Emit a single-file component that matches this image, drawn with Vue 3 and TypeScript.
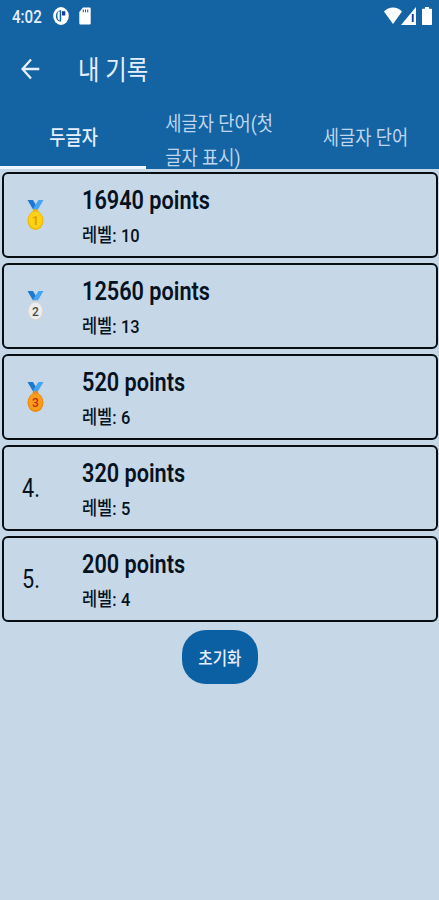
<script setup lang="ts">
import { ref } from 'vue'

interface Score { points: number; level: number }
interface Medal { disc: string; rim: string; ink: string }

const tabs: string[][] = [['두글자'], ['세글자 단어(첫', '글자 표시)'], ['세글자 단어']]
const active = ref(0)
const scores = ref<Score[]>([
  { points: 16940, level: 10 },
  { points: 12560, level: 13 },
  { points: 520, level: 6 },
  { points: 320, level: 5 },
  { points: 200, level: 4 },
])
const medals: Medal[] = [
  { disc: '#fcd116', rim: '#efb70c', ink: '#e09a00' },
  { disc: '#ececec', rim: '#d2d3d5', ink: '#4a4a4a' },
  { disc: '#fb9d1c', rim: '#ee8a12', ink: '#c62b0b' },
]
</script>

<template>
  <div class="screen">
    <header class="top">
      <div class="status">
        <span class="clock"><span class="text">4:02</span></span>
        <svg class="app-dot" width="16" height="18" viewBox="0 0 16 18">
          <ellipse cx="8" cy="9" rx="7.8" ry="9" fill="#fff" />
          <path d="M8.200 3.200V14.600C4.800 14.600 2.900 12.100 2.900 9S4.800 3.200 8.200 3.200z" fill="#1464a4" />
          <path d="M5 4.500h1.700v9H6.200Q4.300 12 4.300 9z" fill="#fff" />
          <path d="M9 4.200h3.300v4.300H9z" fill="#173f9a" />
        </svg>
        <svg class="sd" width="12" height="18" viewBox="0 0 12 18">
          <path d="M4 .5h6.500a1.200 1.200 0 0 1 1.200 1.200v14.600a1.200 1.200 0 0 1-1.200 1.200h-9A1.200 1.200 0 0 1 .3 16.300V5z" fill="#fff" />
          <path d="M4.300 2.500v2.700M6.500 2.500v2.700M8.700 2.500v2.700" stroke="#1464a4" stroke-width="1.100" />
        </svg>
        <span class="grow"></span>
        <svg width="18" height="17" viewBox="0 0 18 17"><path d="M9 17 0 4.500C4.800-1 13.200-1 18 4.500z" fill="#fff" /></svg>
        <svg class="signal" width="15" height="18" viewBox="0 0 15 18">
          <path d="M15 0v18H0z" fill="#fff" /><path d="M10.800 7h1.900V15H10.800z" fill="#173f9a" />
        </svg>
        <svg class="battery" width="10" height="18" viewBox="0 0 10 18"><path d="M3 0h4v1.800h2.300q.7 0 .7.800v14.600q0 .8-.7.800H.7Q0 18 0 17.200V2.600q0-.8.7-.8H3z" fill="#fff" /></svg>
      </div>
      <div class="bar">
        <svg width="19" height="22" viewBox="0 0 19 22"><path d="M10 1.500 1.500 11 10 20.500M1.500 11H18.300" fill="none" stroke="#e6efff" stroke-width="2.300" /></svg>
        <h1 class="title"><span class="text">내 기록</span></h1>
      </div>
      <nav class="tabs">
        <button v-for="(tab, i) in tabs" :key="i" class="tab" :class="{ active: active === i, double: tab.length > 1 }" @click="active = i">
          <span class="label"><span v-for="line in tab" :key="line" class="line">{{ line }}</span></span>
        </button>
      </nav>
    </header>

    <main class="list">
      <article v-for="(s, i) in scores" :key="i" class="card">
        <div class="rank">
          <svg v-if="i < 3" class="medal" width="17" height="31" viewBox="0 0 17 31">
            <path d="M.5 0H6l3.800 6.500-2.600 5z" fill="#1c78d0" />
            <path d="M16.500 0h-5L6 8.500l3.500 3.200z" fill="#44a5f3" />
            <rect x="5.800" y="9.300" width="5.400" height="3.800" rx="1" :fill="medals[i].rim" />
            <ellipse cx="8.500" cy="20.500" rx="8" ry="9.700" :fill="medals[i].rim" />
            <ellipse cx="8.500" cy="20" rx="6.900" ry="8.500" :fill="medals[i].disc" />
            <text x="8.500" y="24.800" class="numeral" text-anchor="middle" :fill="medals[i].ink">{{ i + 1 }}</text>
          </svg>
          <span v-else class="text place">{{ i + 1 }}.</span>
        </div>
        <div class="info">
          <span class="text points">{{ s.points }} points</span>
          <span class="level"><span class="text ko">레벨:</span><span class="text num">{{ s.level }}</span></span>
        </div>
      </article>
    </main>
    <button class="reset"><span class="text">초기화</span></button>
  </div>
</template>

<style>
body { margin: 0; background: #c6d8e7; }
</style>

<style scoped>
.screen {
  box-sizing: border-box;
  height: 900px;
  overflow: hidden;
  background: #c6d8e7;
  color: #06121f;
  font-family: Roboto, "Noto Sans CJK KR", sans-serif;
}
button { border: 0; padding: 0; font: inherit; color: inherit; background: none; }
.text { display: inline-block; transform: scaleX(.865); transform-origin: left center; white-space: nowrap; }
.top { height: 169px; background: #1464a4; color: #e6efff; }
.status { display: flex; height: 34px; box-sizing: border-box; padding: 7px 7px 0 12px; align-items: flex-start; }
.clock { width: 41px; font-size: 18px; line-height: 20px; font-weight: 500; }
.clock .text { transform: scaleX(.84); }
.sd { margin-left: 10px; }
.grow { flex: 1; }
.signal { margin-left: -1px; }
.battery { margin-left: 6px; }
.bar { display: flex; align-items: center; height: 70px; padding-left: 21px; }
.title { margin: 4px 0 0 38px; font-size: 27px; font-weight: 400; line-height: 40px; }
.tabs { display: grid; grid-template-columns: repeat(3, 1fr); height: 65px; }
.tab {
  display: flex;
  align-items: center;
  justify-content: center;
  height: 65px;
  box-sizing: border-box;
  border-bottom: 3px solid transparent;
  padding-top: 6px;
  color: #bfd5ee;
  font-size: 20px;
  line-height: 35px;
}
.tab.double { align-items: flex-start; padding-top: 3px; line-height: 34px; }
.tab.active { border-bottom-color: #edf6ff; color: #e6efff; font-weight: 500; padding-top: 7px; }
.label { transform: scaleX(.88); text-align: left; }
.line { display: block; white-space: nowrap; }
.list { display: flex; flex-direction: column; gap: 5px; padding: 3px 1px 0 2px; }
.card { display: flex; height: 86px; box-sizing: border-box; border: 2px solid #080d12; border-radius: 6px; }
.rank { display: flex; align-items: center; width: 78px; box-sizing: border-box; padding-left: 18px; }
.medal { margin-left: 5px; }
.numeral { font: 500 12px Roboto, sans-serif; }
.place { font-size: 25px; font-weight: 400; }
.info { display: flex; flex-direction: column; align-items: flex-start; padding-top: 9px; }
.points { font-size: 25px; line-height: 36px; font-weight: 600; transform: scaleX(.867); }
.level { display: flex; height: 34px; font-size: 19px; line-height: 34px; font-weight: 500; }
.ko { width: 39px; }
.reset {
  display: block;
  width: 76px;
  height: 54px;
  margin: 8px auto 0 182px;
  border-radius: 24px;
  background: #0b5fa3;
  color: #e6efff;
  font-size: 18px;
  font-weight: 500;
}
.reset .text { transform-origin: center; }
</style>
